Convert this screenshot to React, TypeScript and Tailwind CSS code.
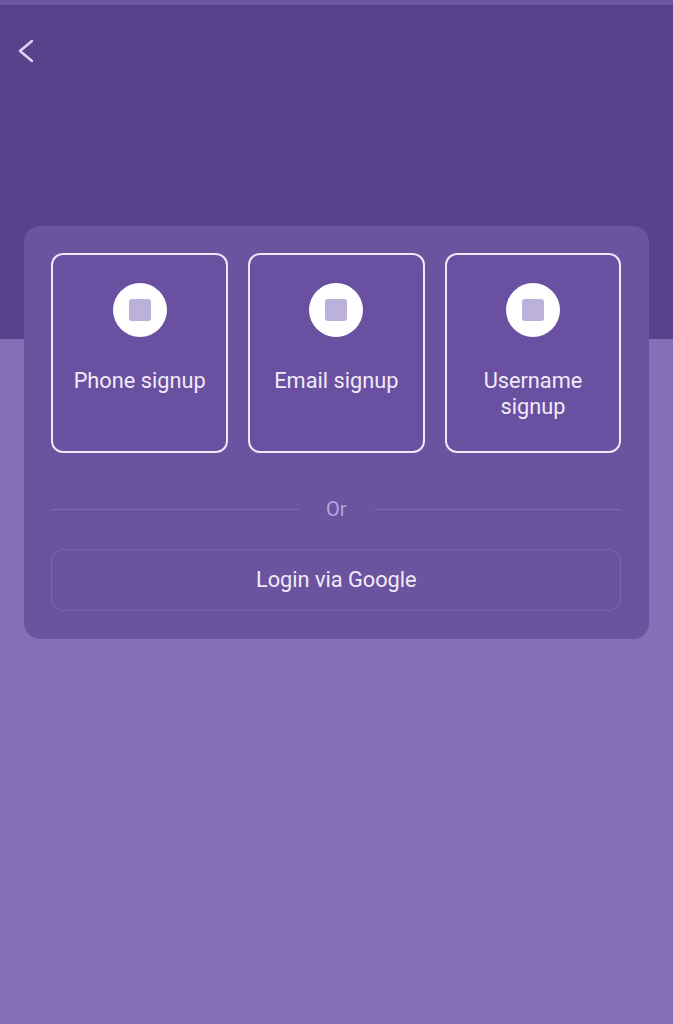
const signups = ["Phone signup", "Email signup", "Username signup"];

function SignupTile({ label }: { label: string }) {
  return (
    <button className="h-[200px] flex flex-col items-center rounded-xl border-2 border-[#efe7f6] pt-[28px] px-3 bg-[#6a50a0]">
      <span className="w-[54px] h-[54px] shrink-0 rounded-full bg-white flex items-center justify-center">
        <span className="w-[22px] h-[22px] rounded-[3px] bg-[#bbb1da]" />
      </span>
      <span className="mt-[31px] text-[21.75px] leading-[26px] text-center text-[#f1eaf8]">{label}</span>
    </button>
  );
}

export default function App() {
  return (
    <div className="min-h-screen flex flex-col bg-[#8570b6] font-['Roboto',sans-serif]">
      <div className="h-[5px] bg-[#6f56a5]" />
      <header className="h-[334px] bg-[#59418b] px-[18px] pt-[35px]">
        <svg width="15" height="22" viewBox="0 0 15 22" fill="none" stroke="#e0d5ef" strokeWidth="2.5" className="block">
          <path d="M14 1 L2 11 L14 21" strokeLinecap="round" strokeLinejoin="round" />
        </svg>
      </header>

      <main className="mx-6 -mt-[113px] rounded-2xl bg-[#6b53a0] pl-[27.3px] pr-[27.7px] pt-[27px] pb-[28px]">
        <div className="grid grid-cols-3 gap-5">
          {signups.map((s) => (
            <SignupTile key={s} label={s} />
          ))}
        </div>

        <div className="mt-[43px] h-[26px] flex items-center gap-[27px]">
          <div className="flex-1 h-px bg-[#7e6ab0]" />
          <span className="text-[20px] text-[#b5a6d8]">Or</span>
          <div className="flex-1 h-px bg-[#7e6ab0]" />
        </div>

        <button className="mt-[27px] w-full h-[62px] rounded-xl border border-[#7a65ac] text-[21.75px] text-[#f1eaf8]">
          Login via Google
        </button>
      </main>
    </div>
  );
}
